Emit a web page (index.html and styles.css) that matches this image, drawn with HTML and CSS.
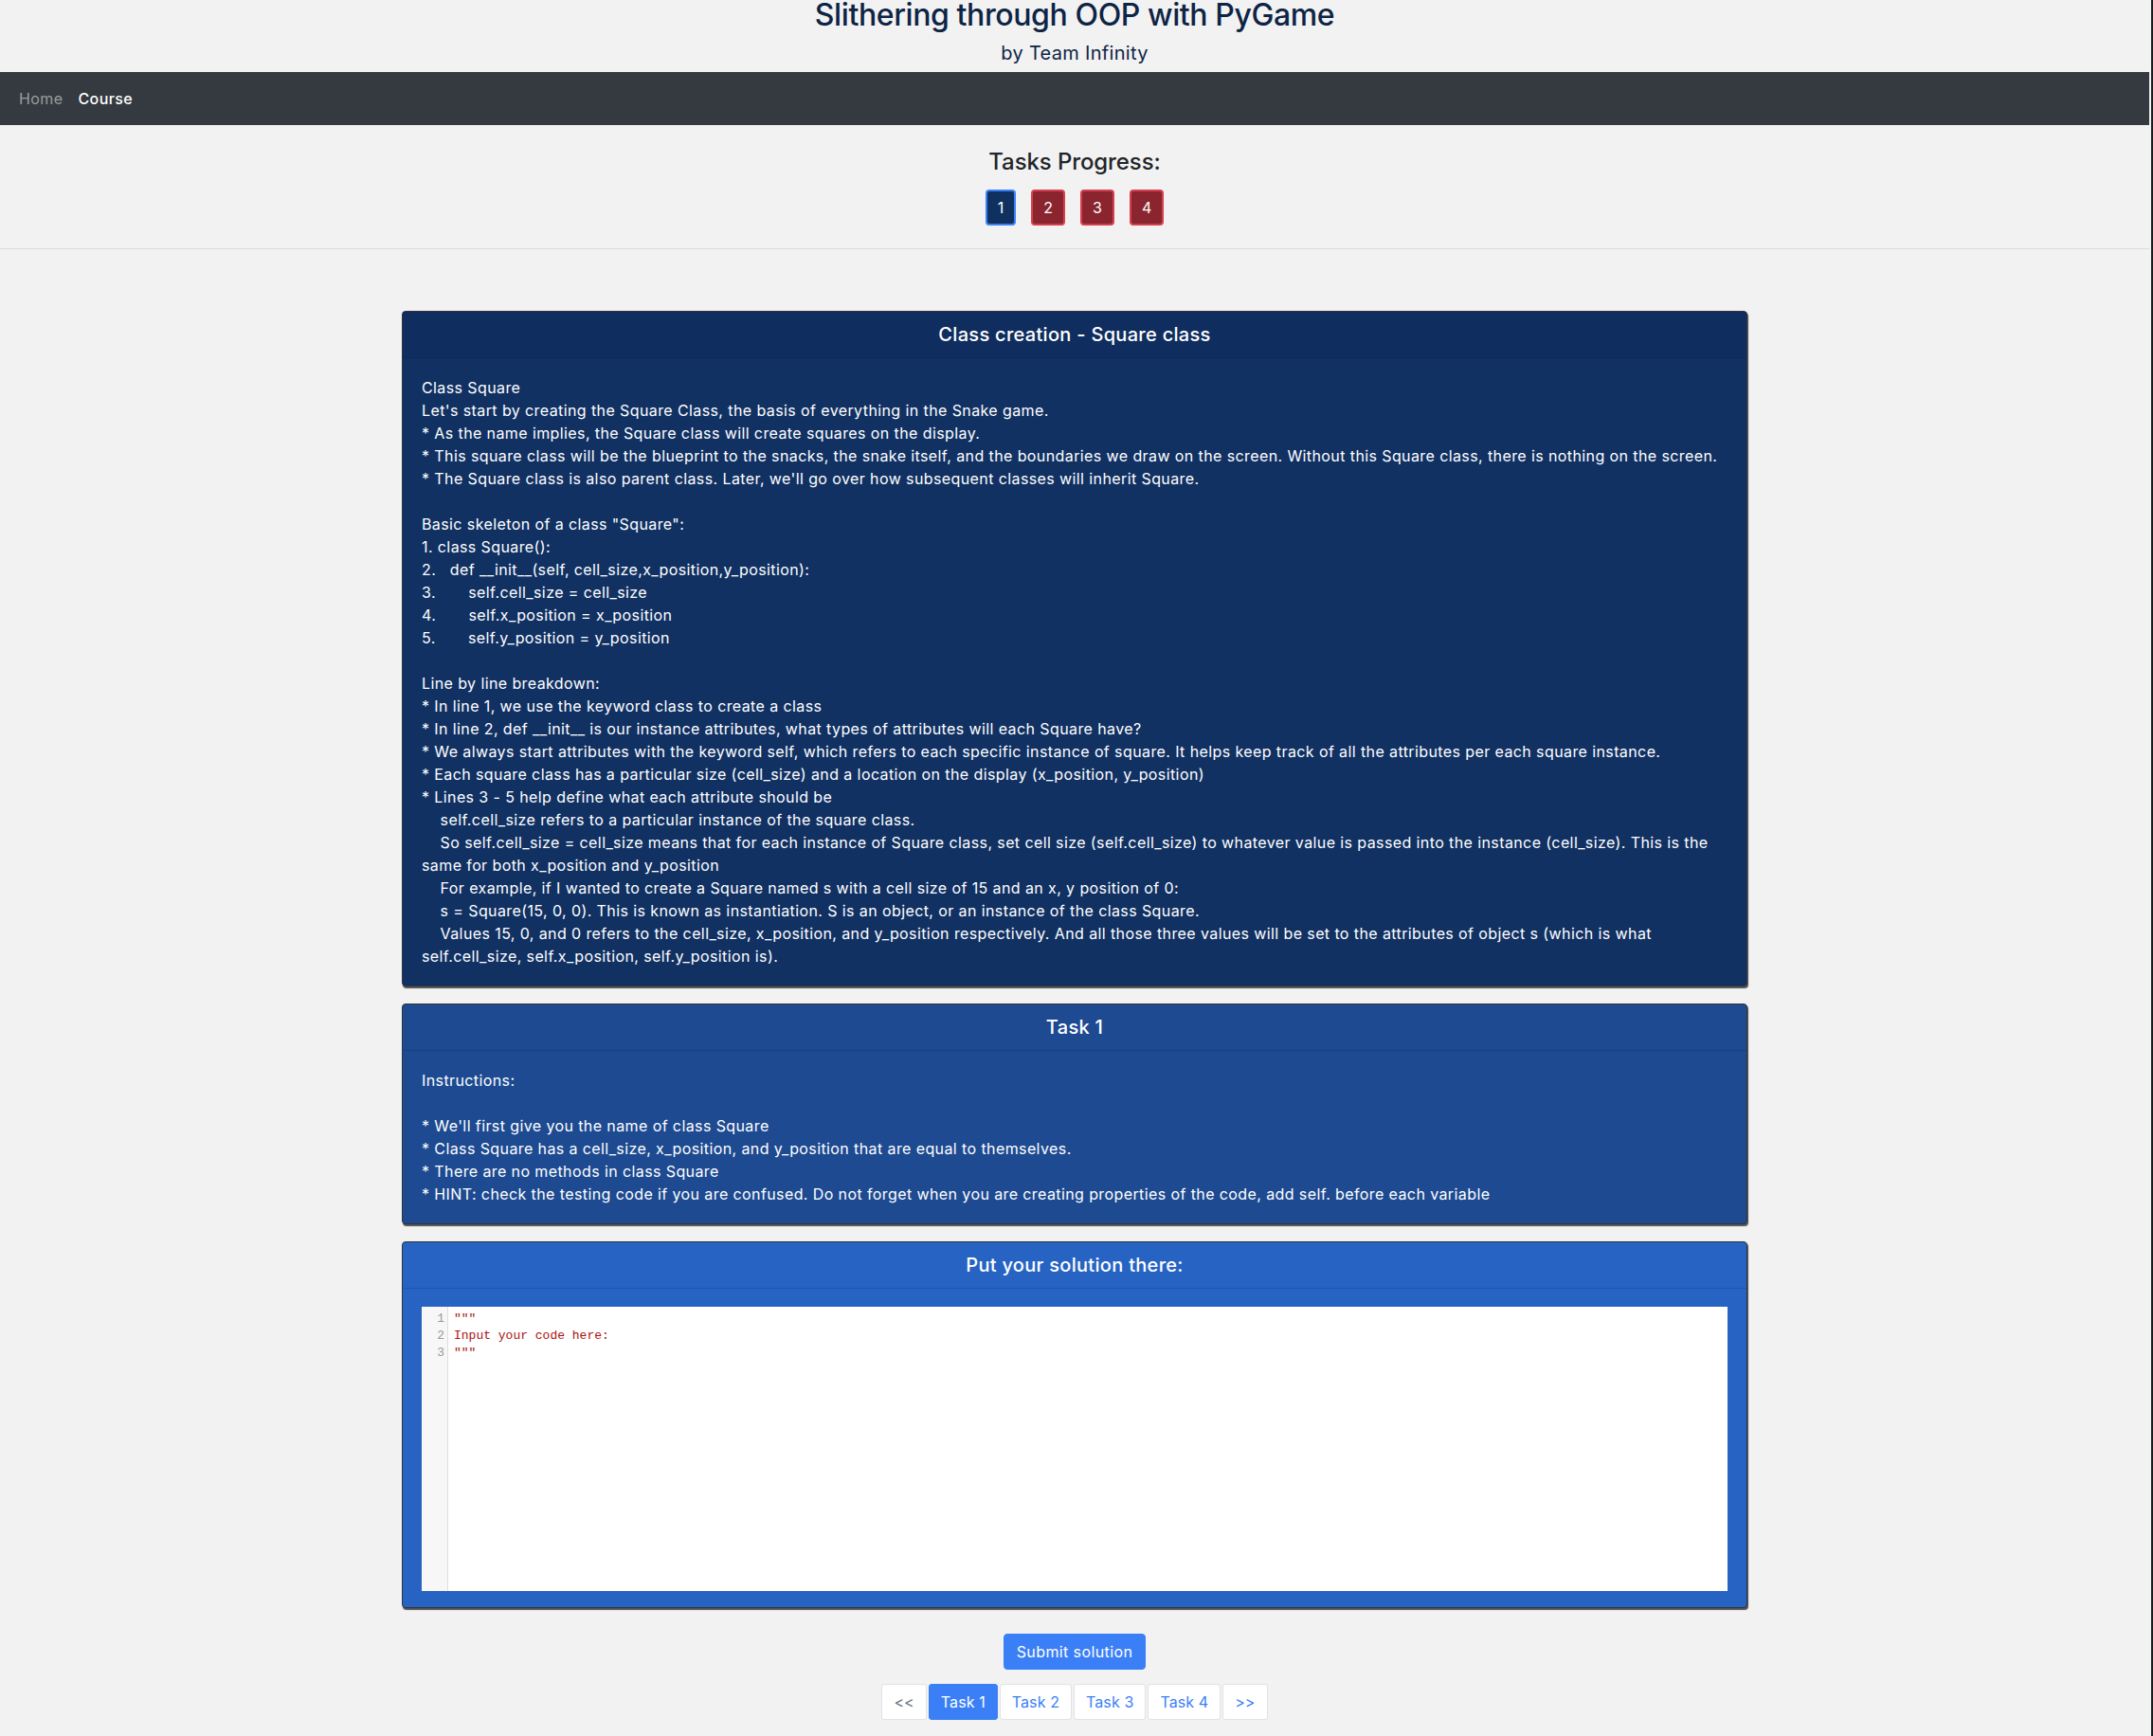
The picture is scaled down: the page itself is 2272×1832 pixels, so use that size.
FILE: index.html
```html
<!DOCTYPE html>
<html lang="en">
<head>
<meta charset="utf-8">
<title>Slithering through OOP with PyGame</title>
<link rel="stylesheet" href="styles.css">
</head>
<body>
<header class="site-header">
  <h2 class="site-title">Slithering through OOP with PyGame</h2>
  <h5 class="site-sub">by Team Infinity</h5>
</header>
<nav class="navbar">
  <a class="nav-link" href="#">Home</a>
  <a class="nav-link active" href="#">Course</a>
</nav>
<section class="progress">
  <h4 class="progress-title">Tasks Progress:</h4>
  <div class="progress-btns">
    <button class="pbtn pbtn-current">1</button>
    <button class="pbtn pbtn-todo">2</button>
    <button class="pbtn pbtn-todo">3</button>
    <button class="pbtn pbtn-todo">4</button>
  </div>
</section>
<hr class="divider">
<main class="content">
  <div class="card card-lesson">
    <div class="card-header"><h5 class="card-title">Class creation - Square class</h5></div>
    <div class="card-body">
      Class Square<br>
      Let's start by creating the Square Class, the basis of everything in the Snake game.<br>
      * As the name implies, the Square class will create squares on the display.<br>
      * This square class will be the blueprint to the snacks, the snake itself, and the boundaries we draw on the screen. Without this Square class, there is nothing on the screen.<br>
      * The Square class is also parent class. Later, we'll go over how subsequent classes will inherit Square.<br>
      <br>
      Basic skeleton of a class "Square":<br>
      1. class Square():<br>
      2. &nbsp;&nbsp;def __init__(self, cell_size,x_position,y_position):<br>
      3. &nbsp;&nbsp;&nbsp;&nbsp;&nbsp;&nbsp;self.cell_size = cell_size<br>
      4. &nbsp;&nbsp;&nbsp;&nbsp;&nbsp;&nbsp;self.x_position = x_position<br>
      5. &nbsp;&nbsp;&nbsp;&nbsp;&nbsp;&nbsp;self.y_position = y_position<br>
      <br>
      Line by line breakdown:<br>
      * In line 1, we use the keyword class to create a class<br>
      * In line 2, def __init__ is our instance attributes, what types of attributes will each Square have?<br>
      * We always start attributes with the keyword self, which refers to each specific instance of square. It helps keep track of all the attributes per each square instance.<br>
      * Each square class has a particular size (cell_size) and a location on the display (x_position, y_position)<br>
      * Lines 3 - 5 help define what each attribute should be<br>
      &nbsp;&nbsp;&nbsp;&nbsp;self.cell_size refers to a particular instance of the square class.<br>
      &nbsp;&nbsp;&nbsp;&nbsp;So self.cell_size = cell_size means that for each instance of Square class, set cell size (self.cell_size) to whatever value is passed into the instance (cell_size). This is the<br>same for both x_position and y_position<br>
      &nbsp;&nbsp;&nbsp;&nbsp;For example, if I wanted to create a Square named s with a cell size of 15 and an x, y position of 0:<br>
      &nbsp;&nbsp;&nbsp;&nbsp;s = Square(15, 0, 0). This is known as instantiation. S is an object, or an instance of the class Square.<br>
      &nbsp;&nbsp;&nbsp;&nbsp;Values 15, 0, and 0 refers to the cell_size, x_position, and y_position respectively. And all those three values will be set to the attributes of object s (which is what<br>self.cell_size, self.x_position, self.y_position is).
    </div>
  </div>

  <div class="card card-task">
    <div class="card-header"><h5 class="card-title">Task 1</h5></div>
    <div class="card-body">
      Instructions:<br>
      <br>
      * We'll first give you the name of class Square<br>
      * Class Square has a cell_size, x_position, and y_position that are equal to themselves.<br>
      * There are no methods in class Square<br>
      * HINT: check the testing code if you are confused. Do not forget when you are creating properties of the code, add self. before each variable
    </div>
  </div>

  <div class="card card-solution">
    <div class="card-header"><h5 class="card-title">Put your solution there:</h5></div>
    <div class="card-body card-body-editor">
      <div class="editor">
        <div class="gutter">
          <span class="lineno">1</span>
          <span class="lineno">2</span>
          <span class="lineno">3</span>
        </div>
        <div class="code">
          <div class="code-line">"""</div>
          <div class="code-line">Input your code here:</div>
          <div class="code-line">"""</div>
        </div>
      </div>
    </div>
  </div>

  <div class="actions">
    <button class="submit">Submit solution</button>
  </div>

  <nav class="pager">
    <a class="page-item page-disabled" href="#">&lt;&lt;</a>
    <a class="page-item page-active" href="#">Task 1</a>
    <a class="page-item" href="#">Task 2</a>
    <a class="page-item" href="#">Task 3</a>
    <a class="page-item" href="#">Task 4</a>
    <a class="page-item" href="#">&gt;&gt;</a>
  </nav>
</main>
</body>
</html>
```

FILE: styles.css
```css
html {
  background: #1c1d21;
}

body {
  margin: 0 2px 0 0;
  padding-right: 2px;
  min-height: 1832px;
  background: #f2f2f2;
  font-family: Inter, "Liberation Sans", sans-serif;
  font-size: 16px;
  line-height: 1.5;
  letter-spacing: 0.4px;
  color: #212529;
}

.site-header {
  text-align: center;
  padding-bottom: 8px;
}

.site-title {
  margin: 0;
  font-size: 32px;
  line-height: 32px;
  font-weight: 500;
  letter-spacing: -0.4px;
  color: #0e2445;
}

.site-sub {
  margin: 12px 0 0;
  font-size: 20px;
  line-height: 24px;
  font-weight: 400;
  letter-spacing: 0.3px;
  color: #0e2445;
}

.navbar {
  display: flex;
  align-items: center;
  height: 56px;
  padding: 0 12px;
  background: #343a40;
}

.nav-link {
  padding: 0 8px;
  color: rgba(255, 255, 255, 0.5);
  text-decoration: none;
}

.nav-link.active {
  color: #fff;
  font-weight: 500;
}

.progress {
  padding-top: 25px;
  text-align: center;
}

.progress-title {
  margin: 0 0 14px;
  font-size: 24px;
  line-height: 28.8px;
  font-weight: 500;
  letter-spacing: -0.1px;
}

.progress-btns {
  display: flex;
  justify-content: center;
  gap: 16px;
}

.pbtn {
  height: 38px;
  padding: 0 11px;
  border: 2px solid;
  border-radius: 4px;
  color: #fff;
  font-family: inherit;
  font-size: 16px;
  letter-spacing: 0;
}

.pbtn-current {
  background: #10305f;
  border-color: #3b82f6;
}

.pbtn-todo {
  background: #8a2530;
  border-color: #d6404e;
}

.divider {
  margin: 24px 0 0;
  border: 0;
  border-top: 1px solid #dcdcdc;
}

.content {
  width: 1420px;
  margin: 65px auto 0;
}

.card {
  border: 1px solid #30343a;
  border-radius: 4px;
  box-shadow: 1px 2px 1px rgba(40, 40, 45, 0.8);
  color: #fff;
}

.card + .card {
  margin-top: 18px;
}

.card-header {
  padding: 12px 20px;
  text-align: center;
  border-bottom: 1px solid rgba(0, 0, 0, 0.125);
}

.card-title {
  margin: 0;
  font-size: 20px;
  line-height: 24px;
  font-weight: 500;
  letter-spacing: 0.3px;
}

.card-body {
  padding: 19px 20px;
}

.card-body-editor {
  padding: 19px 20px 17px;
}

.card-lesson {
  background: #113163;
}

.card-lesson .card-header {
  background: #0f2e5f;
}

.card-task {
  background: #1d4a91;
}

.card-solution {
  background: #2763c3;
}

.editor {
  display: flex;
  height: 300px;
  background: #fff;
  font-family: "Liberation Mono", "Courier New", monospace;
  font-size: 13px;
  line-height: 18px;
  letter-spacing: 0;
}

.gutter {
  width: 27px;
  padding-top: 4px;
  background: #f7f7f7;
  border-right: 1px solid #ddd;
  text-align: right;
  color: #999;
}

.lineno {
  display: block;
  padding-right: 3px;
}

.code {
  padding: 4px 6px;
  color: #a11;
}

.actions {
  margin-top: 27px;
  text-align: center;
}

.submit {
  height: 38px;
  padding: 0 13px;
  border: 1px solid #3b7ff6;
  border-radius: 4px;
  background: #3b7ff6;
  color: #fff;
  font-family: inherit;
  font-size: 16px;
  letter-spacing: 0.4px;
}

.pager {
  display: flex;
  justify-content: center;
  gap: 2px;
  margin-top: 15px;
}

.page-item {
  display: flex;
  align-items: center;
  height: 36px;
  padding: 0 12px;
  border: 1px solid #dee2e6;
  border-radius: 3px;
  background: #fff;
  color: #3b7ff6;
  letter-spacing: 0.1px;
  text-decoration: none;
}

.page-active {
  background: #3b7ff6;
  border-color: #3b7ff6;
  color: #fff;
}

.page-disabled {
  color: #6c757d;
}
```
